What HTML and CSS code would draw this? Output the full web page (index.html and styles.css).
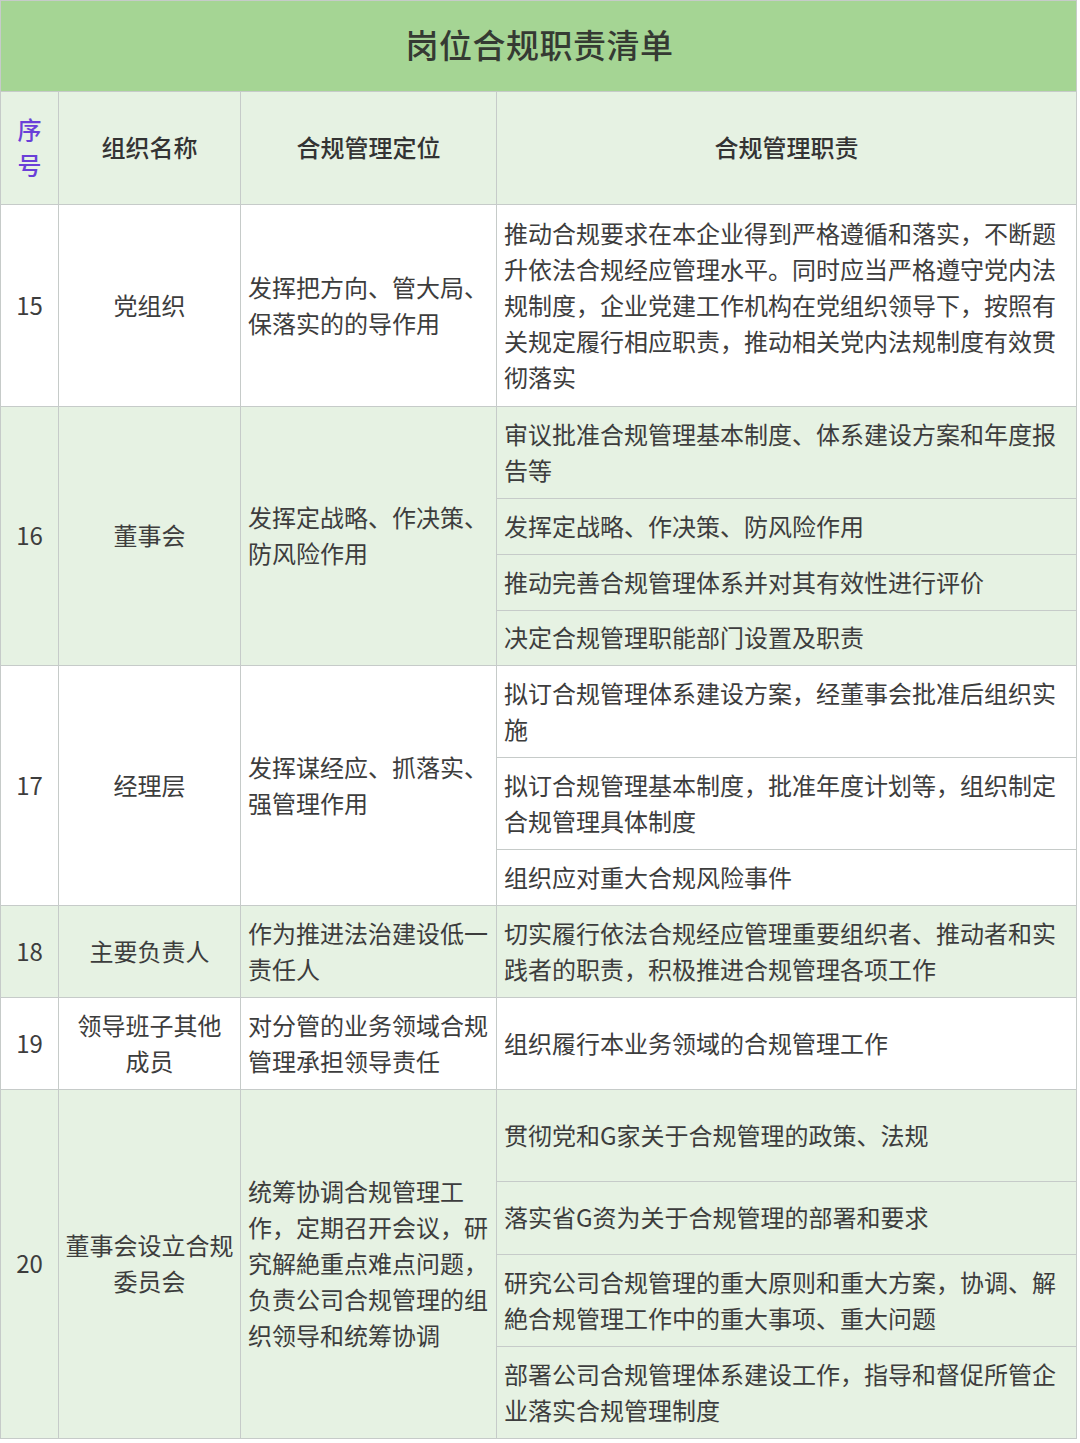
FILE: index.html
```html
<!DOCTYPE html>
<html lang="zh-CN">
<head>
<meta charset="utf-8">
<title>岗位合规职责清单</title>
<link rel="stylesheet" href="styles.css">
</head>
<body>
<table class="duty">
  <colgroup>
    <col class="c-no">
    <col class="c-org">
    <col class="c-pos">
    <col class="c-duty">
  </colgroup>
  <thead>
    <tr class="h-title"><th colspan="4" class="title">岗位合规职责清单</th></tr>
    <tr class="h-head green">
      <th class="num"><span class="seq">序号</span></th>
      <th class="center">组织名称</th>
      <th class="center">合规管理定位</th>
      <th class="center">合规管理职责</th>
    </tr>
  </thead>
  <tbody>
    <tr class="r202">
      <td class="num">15</td>
      <td class="center">党组织</td>
      <td>发挥把方向、管大局、保落实的的导作用</td>
      <td>推动合规要求在本企业得到严格遵循和落实，不断题升依法合规经应管理水平。同时应当严格遵守党内法规制度，企业党建工作机构在党组织领导下，按照有关规定履行相应职责，推动相关党内法规制度有效贯彻落实</td>
    </tr>

    <tr class="green r92">
      <td class="num" rowspan="4">16</td>
      <td class="center" rowspan="4">董事会</td>
      <td rowspan="4">发挥定战略、作决策、防风险作用</td>
      <td>审议批准合规管理基本制度、体系建设方案和年度报告等</td>
    </tr>
    <tr class="green r56"><td>发挥定战略、作决策、防风险作用</td></tr>
    <tr class="green r56"><td>推动完善合规管理体系并对其有效性进行评价</td></tr>
    <tr class="green r55"><td>决定合规管理职能部门设置及职责</td></tr>

    <tr class="r92">
      <td class="num" rowspan="3">17</td>
      <td class="center" rowspan="3">经理层</td>
      <td rowspan="3">发挥谋经应、抓落实、强管理作用</td>
      <td>拟订合规管理体系建设方案，经董事会批准后组织实施</td>
    </tr>
    <tr class="r92"><td>拟订合规管理基本制度，批准年度计划等，组织制定合规管理具体制度</td></tr>
    <tr class="r56"><td>组织应对重大合规风险事件</td></tr>

    <tr class="green r92">
      <td class="num">18</td>
      <td class="center">主要负责人</td>
      <td>作为推进法治建设低一责任人</td>
      <td>切实履行依法合规经应管理重要组织者、推动者和实践者的职责，积极推进合规管理各项工作</td>
    </tr>

    <tr class="r92">
      <td class="num">19</td>
      <td class="center">领导班子其他<br>成员</td>
      <td>对分管的业务领域合规管理承担领导责任</td>
      <td>组织履行本业务领域的合规管理工作</td>
    </tr>

    <tr class="green r92">
      <td class="num" rowspan="4">20</td>
      <td class="center" rowspan="4">董事会设立合规委员会</td>
      <td rowspan="4">统筹协调合规管理工作，定期召开会议，研究解絶重点难点问题，负责公司合规管理的组织领导和统筹协调</td>
      <td>贯彻党和G家关于合规管理的政策、法规</td>
    </tr>
    <tr class="green r73"><td>落实省G资为关于合规管理的部署和要求</td></tr>
    <tr class="green r92"><td>研究公司合规管理的重大原则和重大方案，协调、解絶合规管理工作中的重大事项、重大问题</td></tr>
    <tr class="green r92"><td>部署公司合规管理体系建设工作，指导和督促所管企业落实合规管理制度</td></tr>
  </tbody>
</table>
</body>
</html>
```

FILE: styles.css
```css
html, body {
  margin: 0;
  padding: 0;
  background: #ffffff;
}

body {
  font-family: "Noto Sans CJK SC", "Noto Sans", sans-serif;
  color: #3d3d3d;
}

.duty {
  width: 1076px;
  border-collapse: collapse;
  table-layout: fixed;
  font-size: 24px;
  line-height: 36px;
}

.c-no { width: 58px; }
.c-org { width: 182px; }
.c-pos { width: 256px; }
.c-duty { width: 580px; }

.duty th,
.duty td {
  border: 1px solid #c6cbc9;
  padding: 8px 5px 10px 7px;
  vertical-align: middle;
  text-align: left;
  font-weight: 400;
}

.duty th {
  font-weight: 500;
  text-align: center;
  color: #333333;
}

.h-title { height: 91px; }

.duty .title {
  background: #a5d594;
  font-size: 33px;
  line-height: 40px;
  color: #353a33;
  letter-spacing: 0.5px;
  padding-top: 0;
  padding-bottom: 4px;
}

.h-head { height: 113px; }

.green td,
.green th {
  background: #e6f2e3;
}

.seq {
  display: block;
  color: #6a3fd8;
  width: 24px;
  margin: 0 auto;
  line-height: 36px;
}

.duty .num {
  text-align: center;
  padding-left: 2px;
  padding-right: 2px;
}

.duty .center {
  text-align: center;
  padding-left: 3px;
  padding-right: 3px;
}

.r202 { height: 202px; }
.r92 { height: 92px; }
.r73 { height: 73px; }
.r56 { height: 56px; }
.r55 { height: 55px; }
```
